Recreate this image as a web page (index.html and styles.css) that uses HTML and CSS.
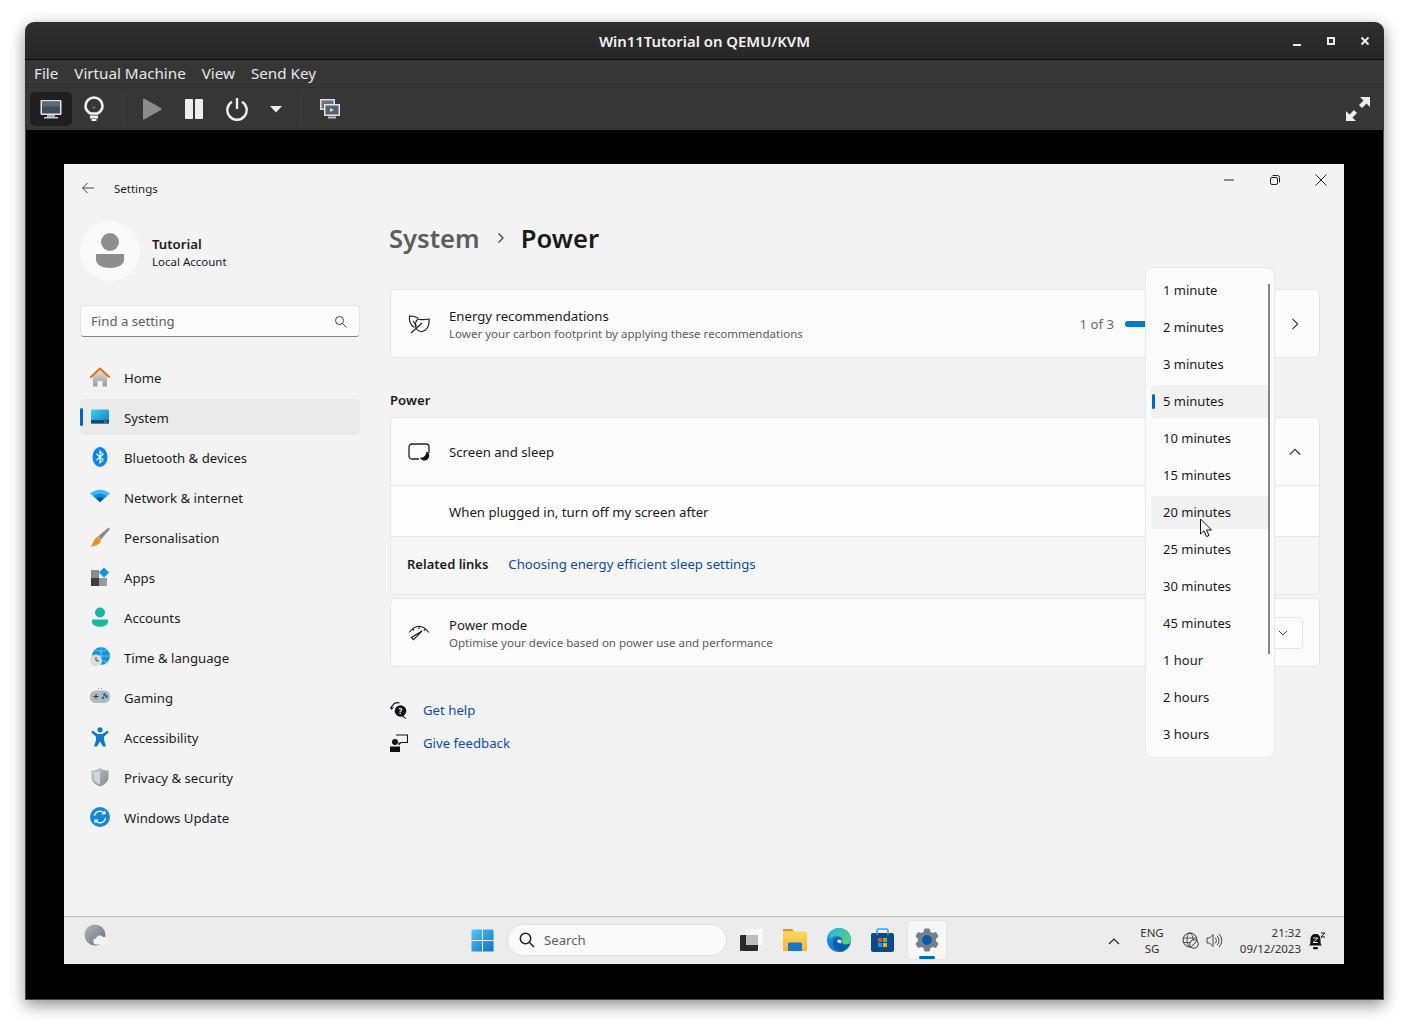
FILE: index.html
```html
<!DOCTYPE html>
<html lang="en">
<head>
    <meta charset="UTF-8">
    <meta name="viewport" content="width=device-width, initial-scale=1.0">
    <title>Win11Tutorial on QEMU/KVM</title>
    <link rel="stylesheet" href="styles.css">
</head>
<body>
<div class="vm-window">

    <!-- Barre de titre du virt-manager -->
    <header class="vm-title">
        <span class="vm-title-text">Win11Tutorial on QEMU/KVM</span>
        <div class="vm-controls">
            <svg width="12" height="12" viewBox="0 0 12 12"><rect x="2" y="9" width="8" height="2" fill="#eee"/></svg>
            <svg width="12" height="12" viewBox="0 0 12 12"><path d="M2 2h8v8H2z M4 4v4h4V4z" fill="#eee" fill-rule="evenodd"/></svg>
            <svg width="12" height="12" viewBox="0 0 12 12"><path d="M2.500 2.500l7 7M9.500 2.500l-7 7" stroke="#eee" stroke-width="2"/></svg>
        </div>
    </header>

    <nav class="vm-menu">
        <span>File</span>
        <span>Virtual Machine</span>
        <span>View</span>
        <span>Send Key</span>
    </nav>

    <div class="vm-toolbar">
        <button class="tool tool-active">
            <svg width="24" height="24" viewBox="0 0 24 24"><rect x="1.500" y="3" width="21" height="15" rx="1" fill="#e4e4e4"/><rect x="3" y="4.500" width="18" height="12" fill="#3f4f5e"/><rect x="3" y="4.500" width="18" height="5" fill="#5a6a78"/><rect x="8" y="18" width="8" height="2" fill="#aaa"/><rect x="5" y="20" width="14" height="1.500" fill="#c8c8c8"/></svg>
        </button>
        <button class="tool">
            <svg width="22" height="26" viewBox="0 0 22 26"><path d="M7.500 17.500C4.500 15.800 2.500 13.500 2.500 10a8.500 8.500 0 0 1 17 0c0 3.500-2 5.800-5 7.500z" fill="none" stroke="#f0f0f0" stroke-width="2.600"/><path d="M9.500 11l1.500 1.200 1.500-1.200" fill="none" stroke="#999" stroke-width="1"/><rect x="7" y="19.500" width="8" height="3" fill="#f0f0f0"/><rect x="8.500" y="23" width="5" height="2" fill="#f0f0f0"/></svg>
        </button>
        <span class="tool-sep"></span>
        <button class="tool tool-play">
            <svg width="22" height="24" viewBox="0 0 22 24"><path d="M2 2.500q0-1.500 1.500-.8L20 11q1.500 1 0 2L3.500 22.300Q2 23 2 21.500z" fill="#8c8c8c"/></svg>
        </button>
        <button class="tool">
            <svg width="20" height="22" viewBox="0 0 20 22"><rect x="1" y="1" width="8" height="20" rx="1" fill="#eee"/><rect x="11" y="1" width="8" height="20" rx="1" fill="#eee"/></svg>
        </button>
        <button class="tool">
            <svg width="24" height="24" viewBox="0 0 24 24"><path d="M7 4.800a9.700 9.700 0 1 0 10 0" fill="none" stroke="#eee" stroke-width="2.400"/><path d="M12 1v11" stroke="#eee" stroke-width="2.400"/></svg>
        </button>
        <button class="tool tool-caret">
            <svg width="12" height="7" viewBox="0 0 12 7"><path d="M0 0h12L6 6.500z" fill="#eee"/></svg>
        </button>
        <span class="tool-sep tool-sep-b"></span>
        <button class="tool">
            <svg width="22" height="22" viewBox="0 0 22 22"><rect x="1" y="1" width="15" height="11" fill="#ddd"/><rect x="2.500" y="2.500" width="12" height="8" fill="#66727c"/><rect x="5" y="6" width="16" height="12" fill="#e4e4e4"/><rect x="6.500" y="7.500" width="13" height="9" fill="#55626d"/><path d="M11 10l4 2-4 2z" fill="#ddd"/><rect x="9" y="18.500" width="8" height="2" fill="#bbb"/></svg>
        </button>
        <button class="tool tool-full">
            <svg width="26" height="26" viewBox="0 0 26 26"><path d="M15 1h10v10l-3.500-3.500-4.500 4.500-3-3 4.500-4.500zM11 25H1V15l3.500 3.500L9 14l3 3-4.500 4.500z" fill="#eee"/></svg>
        </button>
    </div>

    <div class="vm-screen">
        <div class="guest">

            <div class="settings">
                <div class="app-bar">
                    <svg class="back" width="14" height="14" viewBox="0 0 14 14"><path d="M13 7H1.500M6.500 2L1.500 7l5 5" fill="none" stroke="#444" stroke-width="1"/></svg>
                    <span class="app-name">Settings</span>
                    <div class="win-buttons">
                        <span class="win-button"><svg width="12" height="12" viewBox="0 0 12 12"><path d="M1 6h10" stroke="#222" stroke-width="1"/></svg></span>
                        <span class="win-button"><svg width="12" height="12" viewBox="0 0 12 12"><rect x="1.500" y="3.500" width="7" height="7" rx="1.500" fill="none" stroke="#222"/><path d="M3.500 1.500h5a2 2 0 0 1 2 2v5" fill="none" stroke="#222"/></svg></span>
                        <span class="win-button"><svg width="12" height="12" viewBox="0 0 12 12"><path d="M.5 .5l11 11M11.500 .5l-11 11" stroke="#222" stroke-width="1"/></svg></span>
                    </div>
                </div>

                <div class="panes">
                    <!-- Colonne de gauche -->
                    <aside class="sidebar">
                        <div class="profile">
                            <div class="avatar">
                                <svg width="30" height="36" viewBox="0 0 30 36"><circle cx="15" cy="9" r="9" fill="#8e8e8e"/><path d="M1 21h28v6c0 5-7 8-14 8S1 32 1 27z" fill="#8e8e8e"/></svg>
                            </div>
                            <div class="profile-text">
                                <div class="profile-name">Tutorial</div>
                                <div class="profile-type">Local Account</div>
                            </div>
                        </div>

                        <div class="search-box">
                            <span>Find a setting</span>
                            <svg width="13" height="13" viewBox="0 0 13 13"><circle cx="5.500" cy="5.500" r="4" fill="none" stroke="#444"/><path d="M8.500 8.500l4 4" stroke="#444"/></svg>
                        </div>

                        <ul class="nav">
                            <li class="nav-item">
                                <svg width="20" height="20" viewBox="0 0 20 20"><defs><linearGradient id="homeg" x1="0" y1="0" x2="0" y2="1"><stop offset="0" stop-color="#dcdcdc"/><stop offset="1" stop-color="#9a9a9a"/></linearGradient></defs><path d="M3 9.500L10 3l7 6.500V19.500h-4.500V14h-5v5.500H3z" fill="url(#homeg)"/><path d="M.3 10.500L10 1.500l9.700 9" fill="none" stroke="#e56c00" stroke-width="2"/></svg>
                                <span>Home</span>
                            </li>
                            <li class="nav-item nav-active">
                                <svg width="20" height="20" viewBox="0 0 20 20"><defs><linearGradient id="sysg" x1="0" y1="0" x2="1" y2="1"><stop offset="0" stop-color="#3fd4ea"/><stop offset="1" stop-color="#0f78c8"/></linearGradient></defs><rect x="1" y="2.500" width="18" height="14" rx="1" fill="url(#sysg)"/><rect x="1" y="13" width="18" height="3.500" fill="#0d4a78"/><rect x="14" y="14.500" width="1" height="1" fill="#9cc"/><rect x="16" y="14.500" width="1" height="1" fill="#9cc"/></svg>
                                <span>System</span>
                            </li>
                            <li class="nav-item">
                                <svg width="20" height="20" viewBox="0 0 20 20"><ellipse cx="10" cy="10" rx="7.500" ry="10" fill="#0a84f0"/><path d="M6.500 6.800L13 12.800 10 15.800V4.200l3 3-6.500 6" fill="none" stroke="#fff" stroke-width="1.200"/></svg>
                                <span>Bluetooth &amp; devices</span>
                            </li>
                            <li class="nav-item">
                                <svg width="20" height="20" viewBox="0 0 20 20"><path d="M0 6.500Q10 -1 20 6.500L10 15z" fill="#2fc0f5"/><path d="M3.200 9Q10 4 16.800 9L10 15z" fill="#0d8ae0"/><path d="M6.300 11.500Q10 9 13.700 11.500L10 15z" fill="#0a4f96"/></svg>
                                <span>Network &amp; internet</span>
                            </li>
                            <li class="nav-item">
                                <svg width="20" height="20" viewBox="0 0 20 20"><path d="M18.500 .5L8 9.500l3 3L20 2z" fill="#8a8a8a"/><path d="M7.500 9.500l3.500 3.500c-1 4-5 6.300-11 6.500 3-1.500 2.500-3.800 4-6 1-1.500 2-3 3.500-4z" fill="#f08a24"/></svg>
                                <span>Personalisation</span>
                            </li>
                            <li class="nav-item">
                                <svg width="20" height="20" viewBox="0 0 20 20"><rect x="1" y="3" width="8" height="8" fill="#8a8a8a"/><rect x="1" y="11" width="8" height="8" fill="#3e3e3e"/><rect x="9" y="11" width="8" height="8" fill="#9a9a9a"/><path d="M14 .5l5 5-5 5-5-5z" fill="#1290f0"/></svg>
                                <span>Apps</span>
                            </li>
                            <li class="nav-item">
                                <svg width="20" height="20" viewBox="0 0 20 20"><circle cx="10" cy="5.500" r="5" fill="#17b5a5"/><path d="M2 12.500h16v2.500c0 3-4 4.800-8 4.800S2 18 2 15z" fill="#1ab8a0"/></svg>
                                <span>Accounts</span>
                            </li>
                            <li class="nav-item">
                                <svg width="20" height="20" viewBox="0 0 20 20"><circle cx="11" cy="9" r="9" fill="#1394dc"/><path d="M11 0v18M2 9h18M5 3q6 3 12 0M5 15q6-3 12 0" fill="none" stroke="#7adcf0" stroke-width=".7"/><circle cx="6" cy="13.500" r="6" fill="#dcdcdc"/><path d="M6 10v3.800h3" fill="none" stroke="#444"/></svg>
                                <span>Time &amp; language</span>
                            </li>
                            <li class="nav-item">
                                <svg width="20" height="20" viewBox="0 0 20 20"><rect x="0" y="3.500" width="20" height="12.500" rx="5.500" fill="#b4b8bd"/><path d="M3.500 9.500h5M6 7v5" stroke="#333" stroke-width="1"/><circle cx="14.500" cy="7.500" r="1.400" fill="#0f6cbd"/><circle cx="16.500" cy="9.500" r="1.400" fill="#0f6cbd"/><circle cx="13" cy="10.800" r="1.400" fill="#0f6cbd"/><path d="M8 1.500h1M11 1.500h1" stroke="#888"/></svg>
                                <span>Gaming</span>
                            </li>
                            <li class="nav-item">
                                <svg width="20" height="20" viewBox="0 0 20 20"><circle cx="10" cy="2.800" r="2.600" fill="#0f78d4"/><path d="M2.500 3.500L7.500 7h5l5-3.500 1.200 1.800L14 9.800V13l2 6.500h-3L10 14.500 7 19.500H4L6 13V9.800L1.300 5.300z" fill="#0f78d4"/></svg>
                                <span>Accessibility</span>
                            </li>
                            <li class="nav-item">
                                <svg width="20" height="20" viewBox="0 0 20 20"><defs><linearGradient id="shieldg" x1="0" y1="0" x2="1" y2="1"><stop offset="0" stop-color="#c4c8cc"/><stop offset="1" stop-color="#84898e"/></linearGradient></defs><path d="M10 1C7 3 4.500 3.600 1.500 3.600V10c0 4.500 3.500 7.800 8.500 9.500 5-1.700 8.500-5 8.500-9.500V3.600C15.500 3.600 13 3 10 1z" fill="url(#shieldg)"/><path d="M10 3v14.500c-3.800-1.500-6.500-4-6.500-7.500V5.500C6 5.300 8 4.500 10 3z" fill="#d2d5d8"/></svg>
                                <span>Privacy &amp; security</span>
                            </li>
                            <li class="nav-item">
                                <svg width="20" height="20" viewBox="0 0 20 20"><circle cx="10" cy="10" r="10" fill="#1187e0"/><path d="M4.500 9a5.600 5.600 0 0 1 10-2.500M15.500 11a5.600 5.600 0 0 1-10 2.500" fill="none" stroke="#fff" stroke-width="1.400"/><path d="M15.500 3.500v4h-4zM4.500 16.500v-4h4z" fill="#fff"/></svg>
                                <span>Windows Update</span>
                            </li>
                        </ul>
                    </aside>

                    <!-- Partie principale -->
                    <main class="main">
                        <h1 class="crumbs">
                            <span class="crumb-parent">System</span>
                            <svg width="10" height="12" viewBox="0 0 10 12"><path d="M2.500 1.500L7 6l-4.500 4.500" fill="none" stroke="#555" stroke-width="1.500"/></svg>
                            <span class="crumb-current">Power</span>
                        </h1>

                        <section class="card card-energy">
                            <div class="row">
                                <svg class="row-icon" width="22" height="20" viewBox="0 0 22 20"><path d="M10 4C7.500 2.500 4.500 2 1.500 2 1 7 2 11 6.500 13.500" fill="none" stroke="#222" stroke-width="1.200"/><path d="M10 5c3 1 7.500 .5 11 0 .5 6-1 11-7 12.500C9 18 7 13 7.500 9.500c.3-2 1-3.500 2.500-4.500z" fill="none" stroke="#222" stroke-width="1.200"/><path d="M3 19L14 9M5 7l3.500 5" fill="none" stroke="#222" stroke-width="1.100"/></svg>
                                <div class="row-text">
                                    <div class="row-title">Energy recommendations</div>
                                    <div class="row-sub">Lower your carbon footprint by applying these recommendations</div>
                                </div>
                                <span class="progress-label">1 of 3</span>
                                <div class="progress"><div class="progress-fill" style="width: 33%"></div></div>
                                <svg class="row-chevron" width="12" height="12" viewBox="0 0 12 12"><path d="M3.500 .8L8.700 6l-5.200 5.200" fill="none" stroke="#333" stroke-width="1.100"/></svg>
                            </div>
                        </section>

                        <h2 class="section-head">Power</h2>

                        <section class="card card-sleep">
                            <div class="row">
                                <svg class="row-icon" width="22" height="20" viewBox="0 0 22 20"><path d="M11 17H4a3 3 0 0 1-3-3V5a3 3 0 0 1 3-3h14a3 3 0 0 1 3 3v6" fill="none" stroke="#222" stroke-width="1.300"/><path d="M19 10a4.500 4.500 0 1 1-6.500 6c3 .5 5.800-2 6.500-6z" fill="#111" stroke="#111"/></svg>
                                <div class="row-text">
                                    <div class="row-title">Screen and sleep</div>
                                </div>
                                <svg class="row-chevron" width="12" height="12" viewBox="0 0 12 12"><path d="M.8 8.500L6 3.300l5.200 5.200" fill="none" stroke="#333" stroke-width="1.100"/></svg>
                            </div>
                            <div class="sub-row">When plugged in, turn off my screen after</div>
                            <div class="related">
                                <strong>Related links</strong>
                                <a href="#">Choosing energy efficient sleep settings</a>
                            </div>
                        </section>

                        <section class="card card-mode">
                            <div class="row">
                                <svg class="row-icon" width="22" height="20" viewBox="0 0 22 20"><path d="M1 9.500Q11 -3 21 9.500M11 3.500V6M4.500 6l1.500 1.500M17.500 6L16 7.500" fill="none" stroke="#222" stroke-width="1.100"/><path d="M3.500 14.500l2 2.200L14 8z" fill="none" stroke="#222" stroke-width="1.200"/></svg>
                                <div class="row-text">
                                    <div class="row-title">Power mode</div>
                                    <div class="row-sub">Optimise your device based on power use and performance</div>
                                </div>
                                <div class="select">
                                    <svg width="10" height="10" viewBox="0 0 10 10"><path d="M1 3l4 4 4-4" fill="none" stroke="#444" stroke-width="1"/></svg>
                                </div>
                            </div>
                        </section>

                        <div class="help">
                            <div class="help-link">
                                <svg width="18" height="18" viewBox="0 0 18 18"><path d="M1.500 7.500a6 6 0 0 1 8-5.500" fill="none" stroke="#111" stroke-width="1.200"/><path d="M.3 6l1.200 2.500L3.500 6.500" fill="none" stroke="#111"/><circle cx="10.500" cy="10" r="5.800" fill="#111"/><path d="M13 14.500l3.500 3-1 .3-4-3z" fill="#111"/><text x="10.500" y="13" text-anchor="middle" class="help-q">?</text></svg>
                                <a href="#">Get help</a>
                            </div>
                            <div class="help-link">
                                <svg width="18" height="18" viewBox="0 0 18 18"><circle cx="5" cy="8" r="3" fill="#111"/><path d="M0 12.500h10V18H0z" fill="#111"/><path d="M6 1h11.500v7.500H11L9 10.500V8.500" fill="none" stroke="#111" stroke-width="1.100"/></svg>
                                <a href="#">Give feedback</a>
                            </div>
                        </div>
                    </main>
                </div>

                <!-- Liste déroulante ouverte -->
                <div class="popup">
                    <div class="popup-item">1 minute</div>
                    <div class="popup-item">2 minutes</div>
                    <div class="popup-item">3 minutes</div>
                    <div class="popup-item popup-selected">5 minutes</div>
                    <div class="popup-item">10 minutes</div>
                    <div class="popup-item">15 minutes</div>
                    <div class="popup-item popup-hover">20 minutes</div>
                    <div class="popup-item">25 minutes</div>
                    <div class="popup-item">30 minutes</div>
                    <div class="popup-item">45 minutes</div>
                    <div class="popup-item">1 hour</div>
                    <div class="popup-item">2 hours</div>
                    <div class="popup-item">3 hours</div>
                    <span class="popup-scroll"></span>
                </div>

                <svg class="cursor" width="14" height="20" viewBox="0 0 14 20"><path d="M1.500 1v15l3.500-3.300 2.500 5.800 2.500-1-2.500-5.500h5z" fill="#fff" stroke="#111" stroke-width="1"/></svg>
            </div>

            <!-- Barre des tâches -->
            <footer class="taskbar">
                <svg class="weather" width="24" height="24" viewBox="0 0 24 24"><defs><linearGradient id="moon" x1="0" y1="0" x2="1" y2="1"><stop offset="0" stop-color="#b0b5ba"/><stop offset="1" stop-color="#6c7278"/></linearGradient></defs><circle cx="11" cy="11" r="10.500" fill="url(#moon)"/><path d="M12.500 20.500a3 3 0 0 1-.5-6 4 4 0 0 1 7-1.500 3.800 3.800 0 0 1 1.500 7.500z" fill="#f3f3f3"/></svg>

                <svg class="start" width="23" height="23" viewBox="0 0 24 24"><defs><linearGradient id="wing" x1="0" y1="0" x2="1" y2="1"><stop offset="0" stop-color="#53c8f8"/><stop offset="1" stop-color="#0a70c8"/></linearGradient></defs><path d="M.5 1.500a1 1 0 0 1 1-1h10v11H.5zM12.500 .5h10a1 1 0 0 1 1 1v10h-11zM.5 12.500h11v11h-10a1 1 0 0 1-1-1zM12.500 12.500h11v10a1 1 0 0 1-1 1h-10z" fill="url(#wing)"/></svg>

                <div class="task-search">
                    <svg width="16" height="16" viewBox="0 0 16 16"><circle cx="6.500" cy="6.500" r="5.200" fill="none" stroke="#222" stroke-width="1.500"/><path d="M10.500 10.500L15 15" stroke="#222" stroke-width="1.500"/></svg>
                    <span>Search</span>
                </div>

                <div class="task-apps">
                    <span class="task-app">
                        <svg width="24" height="24" viewBox="0 0 24 24"><rect x="7" y="1" width="17" height="16" rx="1" fill="#f8f8f8"/><rect x="1" y="7" width="18" height="16" rx="1" fill="#2a2a2a"/><rect x="7" y="7" width="12" height="10" fill="#bdbdbd"/></svg>
                    </span>
                    <span class="task-app">
                        <svg width="24" height="24" viewBox="0 0 24 24"><defs><linearGradient id="fold" x1="0" y1="0" x2="0" y2="1"><stop offset="0" stop-color="#fcd65a"/><stop offset="1" stop-color="#f5b82e"/></linearGradient></defs><path d="M0 1h9l2 2.500H0z" fill="#d99a10"/><rect x="0" y="3.500" width="24" height="19.500" rx="1" fill="url(#fold)"/><path d="M5 16a1.500 1.500 0 0 1 1.500-1.500h11A1.500 1.500 0 0 1 19 16v7H5z" fill="#0f78d4"/></svg>
                    </span>
                    <span class="task-app">
                        <svg width="24" height="24" viewBox="0 0 24 24"><defs><linearGradient id="edgeb" x1="0" y1="0" x2="1" y2="1"><stop offset="0" stop-color="#1ea0e8"/><stop offset="1" stop-color="#0b5cb0"/></linearGradient><linearGradient id="edgeg" x1="0" y1="0" x2="1" y2="1"><stop offset="0" stop-color="#26b8e0"/><stop offset="1" stop-color="#58d864"/></linearGradient></defs><circle cx="12" cy="12" r="12" fill="url(#edgeb)"/><path d="M3 4.500C5.500 1.500 8.500 0 12 0c7 0 12 5 12 11.500 0 3-2.500 5-5.500 5-1.500 0-3-.5-3.500-1.500 1.500-2.500-.5-7-5-7-3 0-5.500 1-7.500 3 0-2.500 .5-4.500 1-6.500z" fill="url(#edgeg)"/><path d="M6 17c-.8-4.500 2-8 5.500-7.500 2.500 .3 4 2.500 3 5 2 3 6 2.500 8.500 1.500-1.500 3.500-4 6-7.500 7.500C11 23 7 21 6 17z" fill="#0a5cb0"/><path d="M10 13c.5-1.500 3-2 4.500-.5.3 .8 0 1.800-.5 2.500-1.500 .5-3.500 0-4-2z" fill="#d8f0fa"/></svg>
                    </span>
                    <span class="task-app">
                        <svg width="24" height="24" viewBox="0 0 24 24"><rect x="0" y="5" width="23" height="19" rx="2" fill="#0b4a86"/><path d="M6 7V2.500A1.500 1.500 0 0 1 7.500 1h8A1.500 1.500 0 0 1 17 2.500V7" fill="none" stroke="#29a8ea" stroke-width="1.500"/><rect x="7" y="10" width="4" height="4" fill="#e8502a"/><rect x="12" y="10" width="4" height="4" fill="#7cb82c"/><rect x="7" y="15" width="4" height="4" fill="#1a9ae8"/><rect x="12" y="15" width="4" height="4" fill="#f5b800"/></svg>
                    </span>
                    <span class="task-app task-app-open">
                        <svg width="24" height="24" viewBox="0 0 24 24"><path d="M9.500 .5h5l1 3.500 2 1 3.500-1 2.500 4.300-2.500 2.700v2l2.500 2.700-2.500 4.300-3.500-1-2 1-1 3.500h-5l-1-3.500-2-1-3.500 1L.5 15.700 3 13v-2L.5 8.300 3 4l3.500 1 2-1z" fill="#76808a"/><circle cx="12" cy="12" r="5" fill="#0a5aa8"/></svg>
                        <span class="task-dash"></span>
                    </span>
                </div>

                <div class="tray">
                    <span class="tray-caret"><svg width="12" height="8" viewBox="0 0 12 8"><path d="M1 7l5-5 5 5" fill="none" stroke="#222" stroke-width="1.200"/></svg></span>
                    <div class="tray-lang">ENG<br>SG</div>
                    <span class="tray-icon"><svg width="17" height="17" viewBox="0 0 17 17"><circle cx="8" cy="8" r="7" fill="none" stroke="#333"/><ellipse cx="8" cy="8" rx="3" ry="7" fill="none" stroke="#333" stroke-width=".8"/><path d="M1 6h14M1 10.500h14" stroke="#333" stroke-width=".8"/><circle cx="12" cy="12" r="4.200" fill="#ececec" stroke="#333"/><path d="M9.500 14.500l5-5" stroke="#333"/></svg></span>
                    <span class="tray-icon"><svg width="17" height="17" viewBox="0 0 17 17"><path d="M1 6h2.500L7 2.500v12L3.500 11H1z" fill="none" stroke="#333" stroke-width=".9"/><path d="M9 5.500a4 4 0 0 1 0 6M11 3.800a6.500 6.500 0 0 1 0 9.400M13 2a9 9 0 0 1 0 13" fill="none" stroke="#333" stroke-width=".9"/></svg></span>
                    <div class="tray-clock">21:32<br>09/12/2023</div>
                    <span class="tray-bell"><svg width="18" height="18" viewBox="0 0 18 18"><path d="M1 13.500c1.500-1 1.500-3 1.500-6C2.500 4 4.500 2 7.500 2s5 2 5 5.500c0 3 0 5 1.500 6z" fill="#111"/><rect x="5" y="15" width="5" height="2.200" rx="1" fill="#111"/><path d="M5.200 6h4.500L5.200 10.500h4.500" fill="none" stroke="#eee"/><path d="M13 1h4l-4 4h4" fill="none" stroke="#111"/></svg></span>
                </div>
            </footer>
        </div>
    </div>
</div>
</body>
</html>
```

FILE: styles.css
```css
/* Page */
body {
    margin: 0;
    padding: 22px 0 28px 25px;
    background: #fff;
    font-family: "Noto Sans", sans-serif;
}

/* Fenêtre virt-manager */
.vm-window {
    width: 1359px;
    height: 978px;
    display: flex;
    flex-direction: column;
    border-radius: 9px 9px 0 0;
    box-shadow: 0 5px 16px rgba(0, 0, 0, 0.45);
}

.vm-title {
    height: 37px;
    flex: none;
    display: flex;
    align-items: center;
    justify-content: center;
    position: relative;
    border-radius: 9px 9px 0 0;
    background: linear-gradient(#2e2e2e, #272727);
    border-bottom: 1px solid #0c0c0c;
}

.vm-title-text {
    color: #f2f2f2;
    font-size: 14.900px;
    font-weight: 600;
}

.vm-controls {
    position: absolute;
    right: 13px;
    top: 13px;
    display: flex;
    gap: 22px;
}

.vm-menu {
    height: 28px;
    box-sizing: border-box;
    flex: none;
    display: flex;
    align-items: center;
    gap: 16px;
    padding: 0 0 1px 9px;
    background: #363636;
    border-bottom: 1px solid #2f2f2f;
    color: #e8e8e8;
    font-size: 15.200px;
}

.vm-toolbar {
    height: 42px;
    flex: none;
    display: flex;
    align-items: center;
    padding-left: 5px;
    background: #363636;
}

.tool {
    width: 42px;
    height: 34px;
    padding: 0;
    border: none;
    border-radius: 5px;
    background: none;
    display: flex;
    align-items: center;
    justify-content: center;
    margin-right: 1px;
}

.tool-active {
    background: #1f1f1f;
}

.tool-play {
    margin-right: 0;
}

.tool-caret {
    width: 34px;
    margin-right: 0;
}

.tool-sep {
    width: 1px;
    height: 34px;
    margin: 0 7px;
    background: #3f3f3f;
}

.tool-sep-b {
    margin: 0 7px 0 8px;
}

.tool-full {
    margin-left: auto;
    margin-right: 5px;
}

/* Ecran de la VM */
.vm-screen {
    flex: 1;
    box-sizing: border-box;
    background: #000;
    padding: 34px 39px 35px 38px;
    border: 1px solid #4a4a4a;
    border-top: none;
}

.guest {
    width: 1280px;
    height: 800px;
    display: flex;
    flex-direction: column;
    color: #1b1b1b;
}

.settings {
    flex: 1;
    position: relative;
    background: #f3f3f3;
    display: flex;
    flex-direction: column;
}

.app-bar {
    height: 48px;
    flex: none;
    display: flex;
    align-items: center;
    padding-left: 17px;
    position: relative;
}

.back {
    margin-right: 19px;
}

.app-name {
    font-size: 11.500px;
}

.win-buttons {
    position: absolute;
    top: 0;
    right: 0;
    display: flex;
}

.win-button {
    width: 46px;
    height: 32px;
    display: flex;
    align-items: center;
    justify-content: center;
}

.panes {
    flex: 1;
    display: flex;
}

/* Colonne de gauche */
.sidebar {
    width: 280px;
    margin: 0 30px 0 16px;
    flex: none;
}

.profile {
    display: flex;
    align-items: center;
    gap: 12px;
    margin-top: 9px;
}

.avatar {
    width: 60px;
    height: 60px;
    border-radius: 50%;
    background: #fafafa;
    display: flex;
    align-items: center;
    justify-content: center;
}

.profile-text {
    padding-top: 2px;
}

.profile-name {
    font-size: 13.200px;
    font-weight: 600;
    line-height: 20px;
}

.profile-type {
    font-size: 11.500px;
    line-height: 16px;
}

.search-box {
    height: 32px;
    box-sizing: border-box;
    margin-top: 24px;
    padding: 0 12px 0 10px;
    display: flex;
    align-items: center;
    justify-content: space-between;
    background: #fbfbfb;
    border: 1px solid #e4e4e4;
    border-bottom: 1px solid #868686;
    border-radius: 4px;
    color: #5f5f5f;
    font-size: 13.200px;
}

.nav {
    list-style: none;
    margin: 22px 0 0;
    padding: 0;
}

.nav-item {
    height: 36px;
    margin-bottom: 4px;
    padding-left: 10px;
    display: flex;
    align-items: center;
    gap: 14px;
    border-radius: 4px;
    position: relative;
    font-size: 13.200px;
}

.nav-item span {
    padding-top: 2px;
}

.nav-active {
    background: #eaeaea;
}

.nav-active::before {
    content: "";
    position: absolute;
    left: 0;
    top: 9px;
    width: 3px;
    height: 18px;
    border-radius: 2px;
    background: #0067c0;
}

/* Partie principale */
.main {
    width: 930px;
    flex: none;
}

.crumbs {
    height: 40px;
    margin: 6px 0 0 -1px;
    display: flex;
    align-items: center;
    gap: 16px;
    font-size: 25.600px;
    font-weight: 600;
    color: #1a1a1a;
}

.crumb-parent {
    color: #5d5d5d;
}

.crumb-current {
    margin-left: -1px;
}

.card {
    background: #fbfbfb;
    border: 1px solid #e6e6e6;
    border-radius: 5px;
    box-sizing: border-box;
}

.card-energy {
    margin-top: 31px;
}

.card-sleep {
    margin-top: 7px;
    height: 178px;
    overflow: hidden;
}

.card-mode {
    margin-top: 3px;
}

.section-head {
    margin: 32px 0 0;
    font-size: 13.200px;
    font-weight: 600;
    line-height: 20px;
}

.row {
    height: 67px;
    display: flex;
    align-items: center;
    padding-left: 17px;
}

.row-icon {
    flex: none;
    margin-right: 19px;
}

.row-text {
    flex: 1;
    padding-top: 1px;
}

.row-title {
    font-size: 13.200px;
    line-height: 18px;
}

.row-sub {
    margin-top: 1px;
    font-size: 11.550px;
    line-height: 16px;
    color: #5d5d5d;
}

.row-chevron {
    flex: none;
    margin-right: 18px;
}

.progress-label {
    font-size: 13.200px;
    color: #6d6d6d;
    margin-right: 11px;
}

.progress {
    width: 150px;
    height: 6px;
    margin-right: 14px;
    border-radius: 3px;
    background: #c8c8c8;
}

.progress-fill {
    height: 100%;
    border-radius: 3px;
    background: #0078d4;
}

.sub-row {
    height: 52px;
    box-sizing: border-box;
    padding: 1px 0 0 58px;
    display: flex;
    align-items: center;
    background: #fdfdfd;
    border-top: 1px solid #e6e6e6;
    border-bottom: 1px solid #e6e6e6;
    font-size: 13.200px;
}

.related {
    height: 57px;
    box-sizing: border-box;
    padding: 0 0 3px 16px;
    display: flex;
    align-items: center;
    gap: 20px;
    background: #f6f6f6;
    font-size: 13.200px;
}

.related strong {
    font-size: 13px;
    font-weight: 600;
}

a {
    color: #0b4da2;
    text-decoration: none;
}

.select {
    width: 38px;
    height: 32px;
    box-sizing: border-box;
    margin-right: 16px;
    padding-right: 14px;
    display: flex;
    align-items: center;
    justify-content: flex-end;
    background: #fdfdfd;
    border: 1px solid #e4e4e4;
    border-radius: 4px;
}

.help {
    margin-top: 26px;
}

.help-link {
    height: 33px;
    display: flex;
    align-items: center;
    gap: 15px;
    font-size: 13.200px;
}

.help-q {
    font-size: 8px;
    font-weight: 700;
    fill: #fff;
}

/* Liste déroulante */
.popup {
    position: absolute;
    left: 1081px;
    top: 103px;
    width: 130px;
    height: 491px;
    box-sizing: border-box;
    padding: 6px 5px;
    background: #fbfbfb;
    border: 1px solid #e8e8e8;
    border-radius: 8px;
    font-size: 13px;
    z-index: 10;
}

.popup-item {
    height: 33px;
    box-sizing: border-box;
    margin-bottom: 4px;
    padding: 0 0 2px 12px;
    display: flex;
    align-items: center;
    border-radius: 4px;
    position: relative;
}

.popup-selected,
.popup-hover {
    background: #f1f1f1;
}

.popup-selected::before {
    content: "";
    position: absolute;
    left: 1px;
    top: 9px;
    width: 3px;
    height: 15px;
    border-radius: 2px;
    background: #0067c0;
}

.popup-scroll {
    position: absolute;
    right: 4px;
    top: 16px;
    width: 2px;
    height: 370px;
    background: #868686;
}

.cursor {
    position: absolute;
    left: 1135px;
    top: 354px;
    z-index: 11;
}

/* Barre des tâches */
.taskbar {
    height: 48px;
    flex: none;
    box-sizing: border-box;
    padding-bottom: 1px;
    display: flex;
    align-items: center;
    background: #ececec;
    border-top: 1px solid #bcbcbc;
    font-size: 12px;
}

.weather {
    margin: -9px 0 0 20px;
}

.start {
    margin-left: 363px;
}

.task-search {
    width: 220px;
    height: 32px;
    box-sizing: border-box;
    margin-left: 13px;
    padding-left: 11px;
    display: flex;
    align-items: center;
    gap: 9px;
    background: #fafafa;
    border: 1px solid #e0e0e0;
    border-radius: 16px;
    color: #5f5f5f;
    font-size: 13.200px;
}

.task-apps {
    display: flex;
    margin-left: 2px;
}

.task-app {
    width: 44px;
    height: 38px;
    display: flex;
    align-items: center;
    justify-content: center;
    position: relative;
}

.task-app-open {
    background: #f7f7f7;
    border-radius: 4px;
    box-shadow: 0 0 0 1px #e4e4e4;
    width: 38px;
    margin-left: 3px;
}

.task-dash {
    position: absolute;
    left: 11px;
    bottom: 0;
    width: 16px;
    height: 3px;
    border-radius: 2px;
    background: #0067c0;
}

.tray {
    margin-left: auto;
    padding: 1px 11px 0 0;
    display: flex;
    align-items: center;
    color: #333;
    line-height: 16px;
}

.tray-caret {
    width: 24px;
    display: flex;
    justify-content: center;
}

.tray-lang {
    width: 52px;
    text-align: center;
    font-size: 11.500px;
}

.tray-icon {
    width: 24px;
    display: flex;
    justify-content: center;
}

.tray-clock {
    width: 75px;
    text-align: right;
    font-size: 11.500px;
}

.tray-bell {
    width: 32px;
    display: flex;
    justify-content: center;
}
```
